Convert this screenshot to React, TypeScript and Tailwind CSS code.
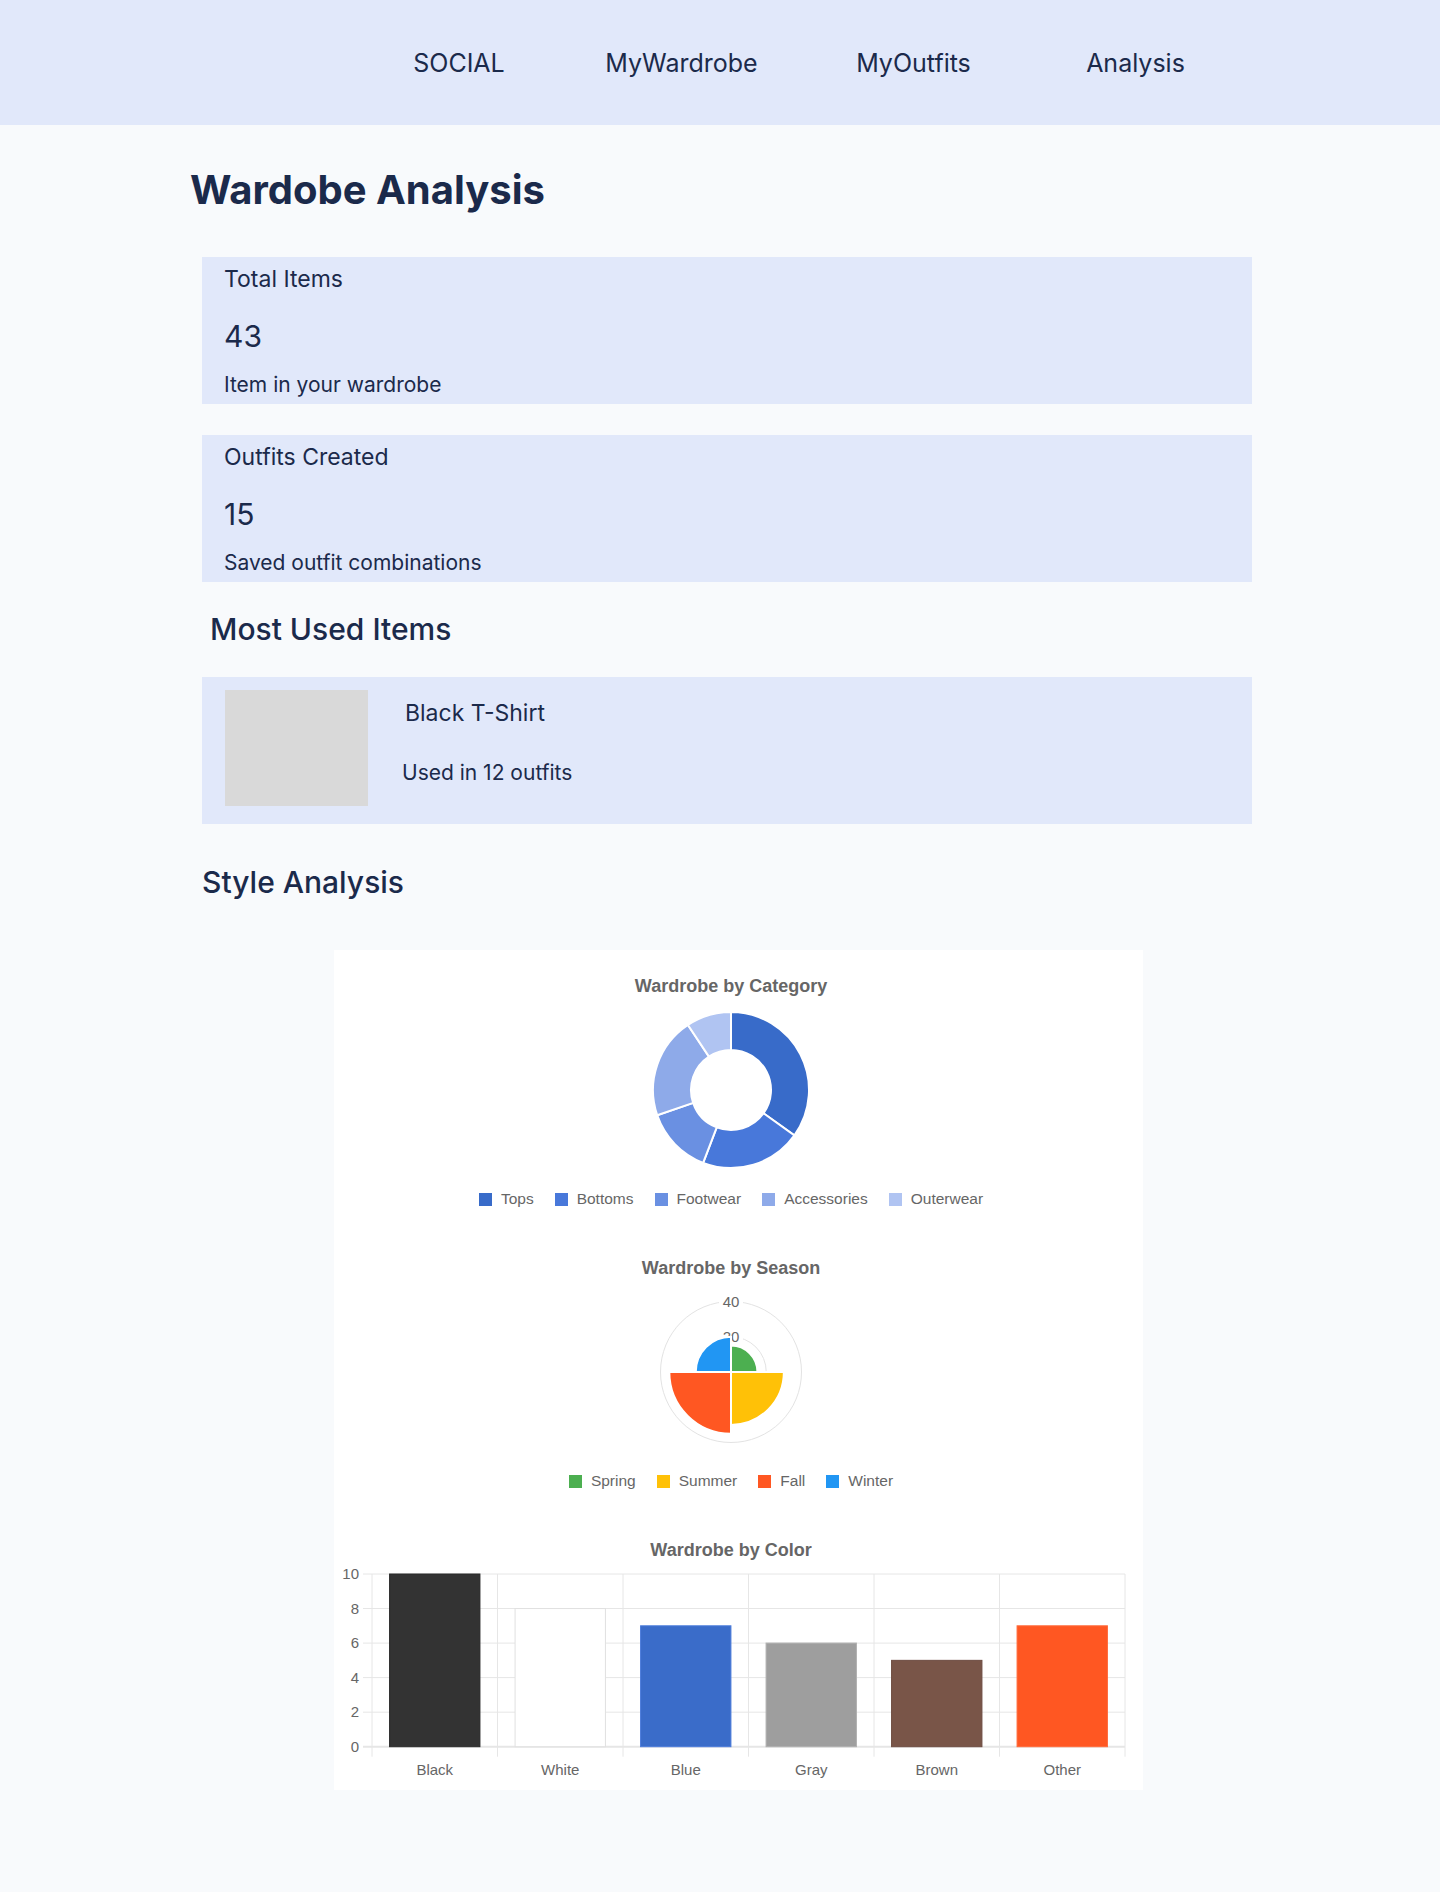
const categories = [
  { label: "Tops", value: 15, fill: "#386bc9", box: "bg-[#386bc9]" },
  { label: "Bottoms", value: 9, fill: "#4878da", box: "bg-[#4878da]" },
  { label: "Footwear", value: 6, fill: "#6a90e2", box: "bg-[#6a90e2]" },
  { label: "Accessories", value: 9, fill: "#8eaae9", box: "bg-[#8eaae9]" },
  { label: "Outerwear", value: 4, fill: "#b0c4f2", box: "bg-[#b0c4f2]" },
];

const seasons = [
  { label: "Spring", value: 15, fill: "#4caf50", box: "bg-[#4caf50]" },
  { label: "Summer", value: 30, fill: "#ffc107", box: "bg-[#ffc107]" },
  { label: "Fall", value: 35, fill: "#ff5722", box: "bg-[#ff5722]" },
  { label: "Winter", value: 20, fill: "#2196f3", box: "bg-[#2196f3]" },
];

const colors = [
  { label: "Black", value: 10, fill: "#333333", stroke: "#2a2a2a" },
  { label: "White", value: 8, fill: "#ffffff", stroke: "#e0e0e0" },
  { label: "Blue", value: 7, fill: "#3a6cc9", stroke: "#4a7bdb" },
  { label: "Gray", value: 6, fill: "#9e9e9e", stroke: "#b0b0b0" },
  { label: "Brown", value: 5, fill: "#795548", stroke: "#6d4c41" },
  { label: "Other", value: 7, fill: "#ff5722", stroke: "#ff6a3a" },
];

// angles in degrees, clockwise from 12 o'clock
function arcPath(cx: number, cy: number, R: number, r: number, a0: number, a1: number) {
  const rad = (a: number) => ((a - 90) * Math.PI) / 180;
  const pt = (rr: number, a: number) => [cx + rr * Math.cos(rad(a)), cy + rr * Math.sin(rad(a))];
  const large = a1 - a0 > 180 ? 1 : 0;
  const [x0, y0] = pt(R, a0);
  const [x1, y1] = pt(R, a1);
  if (r === 0) {
    return `M${cx},${cy} L${x0},${y0} A${R},${R} 0 ${large} 1 ${x1},${y1} Z`;
  }
  const [x2, y2] = pt(r, a1);
  const [x3, y3] = pt(r, a0);
  return `M${x0},${y0} A${R},${R} 0 ${large} 1 ${x1},${y1} L${x2},${y2} A${r},${r} 0 ${large} 0 ${x3},${y3} Z`;
}

function Legend({ items }: { items: { label: string; box: string }[] }) {
  return (
    <div className="flex justify-center items-center gap-[21px] h-[20px]">
      {items.map((item) => (
        <div key={item.label} className="flex items-center gap-[9px]">
          <span className={`w-[13px] h-[13px] ${item.box}`} />
          <span className="text-[15.5px] leading-[20px] text-[#666666]">{item.label}</span>
        </div>
      ))}
    </div>
  );
}

function ChartTitle({ children }: { children: string }) {
  return <h4 className="text-center text-[18px] leading-[22px] font-bold text-[#666666]">{children}</h4>;
}

function CategoryDonut() {
  const total = categories.reduce((s, c) => s + c.value, 0);
  let start = 0;
  return (
    <svg width="160" height="160" viewBox="0 0 160 160" className="mx-auto block">
      {categories.map((c) => {
        const a0 = start;
        const a1 = start + (c.value / total) * 360;
        start = a1;
        return (
          <path key={c.label} d={arcPath(80, 80, 78, 40, a0, a1)} fill={c.fill} stroke="#ffffff" strokeWidth="2" />
        );
      })}
    </svg>
  );
}

function SeasonPolar() {
  const unit = 70.5 / 40;
  return (
    <svg width="160" height="160" viewBox="0 0 160 160" className="mx-auto block overflow-visible">
      <circle cx="80" cy="80" r="70.5" fill="none" stroke="#e3e3e3" strokeWidth="1" />
      <circle cx="80" cy="80" r="35.25" fill="none" stroke="#e3e3e3" strokeWidth="1" />
      <rect x="68" y="2" width="24" height="17" fill="#ffffff" />
      <text x="80" y="15" textAnchor="middle" fontSize="15" fill="#666666" fontFamily="'Liberation Sans', Arial, sans-serif">40</text>
      <rect x="68" y="37" width="24" height="17" fill="#ffffff" />
      <text x="80" y="50" textAnchor="middle" fontSize="15" fill="#666666" fontFamily="'Liberation Sans', Arial, sans-serif">20</text>
      {seasons.map((s, i) => (
        <path
          key={s.label}
          d={arcPath(80, 80, s.value * unit, 0, i * 90, i * 90 + 90)}
          fill={s.fill}
          stroke="#ffffff"
          strokeWidth="2"
        />
      ))}
    </svg>
  );
}

function ColorBars() {
  const left = 34;
  const cat = 125.5;
  const y0 = 185.7;
  const per = 17.27;
  const barW = cat * 0.72;
  const ticks = [0, 2, 4, 6, 8, 10];
  return (
    <svg width="786" height="220" viewBox="0 0 786 220" className="block overflow-visible">
      {ticks.map((t) => (
        <g key={t}>
          <line x1={left - 9} x2={left + cat * 6} y1={y0 - t * per} y2={y0 - t * per} stroke="#e6e6e6" strokeWidth={t === 0 ? 2 : 1} />
          <text
            x="21"
            y={y0 - t * per + 5}
            textAnchor="end"
            fontSize="15"
            fill="#666666"
            fontFamily="'Liberation Sans', Arial, sans-serif"
          >
            {t}
          </text>
        </g>
      ))}
      {Array.from({ length: 7 }).map((_, i) => (
        <line key={i} x1={left + i * cat} x2={left + i * cat} y1={y0 - 10 * per} y2={y0 + 10} stroke="#e6e6e6" strokeWidth="1" />
      ))}
      {colors.map((c, i) => {
        const h = c.value * per;
        const x = left + i * cat + (cat - barW) / 2;
        return (
          <g key={c.label}>
            <rect x={x} y={y0 - h} width={barW} height={h} fill={c.fill} stroke={c.stroke} strokeWidth="1" />
            <text
              x={left + i * cat + cat / 2}
              y="214"
              textAnchor="middle"
              fontSize="15"
              fill="#666666"
              fontFamily="'Liberation Sans', Arial, sans-serif"
            >
              {c.label}
            </text>
          </g>
        );
      })}
    </svg>
  );
}

function StatCard({ title, value, note, className }: { title: string; value: string; note: string; className?: string }) {
  return (
    <div className={`w-[1050px] h-[147px] ml-[12px] bg-[#e1e8fa] pl-[22px] ${className ?? ""}`}>
      <p className="pt-[8px] text-[23px] leading-[28px]">{title}</p>
      <p className="mt-[25px] text-[30px] leading-[36px]">{value}</p>
      <p className="mt-[17px] text-[21px] leading-[28px]">{note}</p>
    </div>
  );
}

export default function App() {
  return (
    <div className="min-h-[1892px] bg-[#f8fafc] text-[#1b2a4b] font-['Inter','Liberation_Sans',sans-serif]">
      <header className="h-[125px] bg-[#e1e8fa] flex items-center pl-[348px] pt-[2px]">
        <a className="w-[222px] text-center text-[25px]">SOCIAL</a>
        <a className="w-[223px] text-center text-[25px]">MyWardrobe</a>
        <a className="w-[241px] text-center text-[25px]">MyOutfits</a>
        <a className="w-[203px] text-center text-[25px]">Analysis</a>
      </header>

      <main className="pl-[190px] pt-[41px]">
        <h1 className="text-[40px] leading-[48px] font-bold">Wardobe Analysis</h1>

        <StatCard className="mt-[43px]" title="Total Items" value="43" note="Item in your wardrobe" />
        <StatCard className="mt-[31px]" title="Outfits Created" value="15" note="Saved outfit combinations" />

        <h2 className="mt-[29px] ml-[20px] text-[30px] leading-[36px] font-medium">Most Used Items</h2>

        <div className="mt-[30px] ml-[12px] w-[1050px] h-[147px] bg-[#e1e8fa] flex">
          <div className="ml-[23px] mt-[13px] w-[143px] h-[116px] bg-[#d9d9d9]" />
          <div className="flex flex-col">
            <p className="ml-[37px] mt-[21px] text-[23px] leading-[30px]">Black T-Shirt</p>
            <p className="ml-[34px] mt-[31px] text-[21px] leading-[28px]">Used in 12 outfits</p>
          </div>
        </div>

        <h2 className="mt-[40px] ml-[12px] text-[30px] leading-[36px] font-medium">Style Analysis</h2>

        <section className="mt-[50px] ml-[144px] w-[809px] bg-white pt-[25px] pl-[4px] pr-[19px] pb-[9px] font-['Liberation_Sans',Arial,sans-serif]">
          <ChartTitle>Wardrobe by Category</ChartTitle>
          <div className="mt-[13px]">
            <CategoryDonut />
          </div>
          <div className="mt-[19px]">
            <Legend items={categories} />
          </div>

          <div className="mt-[48px]">
            <ChartTitle>Wardrobe by Season</ChartTitle>
          </div>
          <div className="mt-[13px]">
            <SeasonPolar />
          </div>
          <div className="mt-[19px]">
            <Legend items={seasons} />
          </div>

          <div className="mt-[48px]">
            <ChartTitle>Wardrobe by Color</ChartTitle>
          </div>
          <ColorBars />
        </section>
      </main>
    </div>
  );
}
